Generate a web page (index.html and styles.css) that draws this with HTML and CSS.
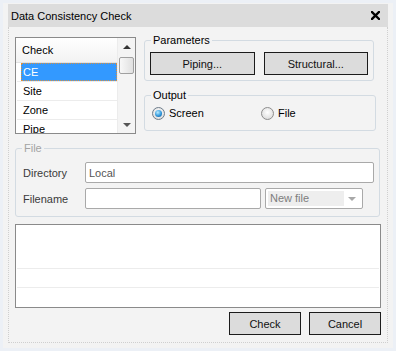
FILE: index.html
```html
<!DOCTYPE html>
<html>
<head>
<meta charset="utf-8">
<link rel="stylesheet" href="styles.css">
</head>
<body>
<div class="window">
  <div class="titlebar">
    <span class="title">Data Consistency Check</span>
    <svg class="close" width="9" height="9" viewBox="0 0 9 9"><path d="M1 1 L8 8 M8 1 L1 8" stroke="#000" stroke-width="2.4" stroke-linecap="square"/></svg>
  </div>
  <div class="panel">
    <div class="toprow">
      <div class="listbox">
        <div class="listcol">
          <div class="listhead">Check</div>
          <div class="row"><div class="cell selected">CE</div></div>
          <div class="row"><div class="cell">Site</div></div>
          <div class="row"><div class="cell">Zone</div></div>
          <div class="row"><div class="cell">Pipe</div></div>
        </div>
        <div class="scrollbar">
          <div class="sbtn"><span class="tri-up"></span></div>
          <div class="track"><div class="thumb"></div></div>
          <div class="sbtn"><span class="tri-down"></span></div>
        </div>
      </div>
      <div class="rightcol">
        <fieldset class="group params">
          <legend>Parameters</legend>
          <div class="btnrow">
            <button class="btn wide">Piping...</button>
            <button class="btn wide">Structural...</button>
          </div>
        </fieldset>
        <fieldset class="group output">
          <legend>Output</legend>
          <div class="radios">
            <div class="opt"><span class="radio checked"><span class="dot"></span></span><span>Screen</span></div>
            <div class="opt"><span class="radio"></span><span>File</span></div>
          </div>
        </fieldset>
      </div>
    </div>
    <fieldset class="group file">
      <legend>File</legend>
      <div class="frow">
        <span class="flabel">Directory</span>
        <input class="tinput dir" type="text" value="Local">
      </div>
      <div class="frow second">
        <span class="flabel">Filename</span>
        <input class="tinput fname" type="text" value="">
        <div class="combo"><span class="ctext">New file</span><span class="carrow"></span></div>
      </div>
    </fieldset>
    <div class="results">
      <div class="rarea"></div>
      <div class="rline"></div>
      <div class="rlast"></div>
    </div>
    <div class="actions">
      <button class="btn act">Check</button>
      <button class="btn act">Cancel</button>
    </div>
  </div>
</div>
</body>
</html>
```
FILE: styles.css
```css
* { box-sizing: border-box; }
html, body { margin: 0; padding: 0; }
body {
  background: #ecf0f6;
  font-family: "Liberation Sans", Arial, sans-serif;
  font-size: 11px;
  color: #000;
  width: 396px;
  height: 351px;
  overflow: hidden;
}
.window {
  margin: 3px 0 0 3px;
  width: 390px;
  height: 345px;
  background: #f3f3f3;
  padding: 1px 5px 0 5px;
}
.titlebar {
  height: 23px;
  background: #dcdcdc;
  display: flex;
  align-items: center;
  justify-content: space-between;
  padding: 0 8px 0 3px;
}
.title { font-size: 11px; line-height: 14px; color: #000; }
.close { display: block; }
.panel {
  border: 1px dotted #cfcfcf;
  border-top: none;
  padding: 0 6px 7px 6px;
}
.toprow { display: flex; align-items: flex-start; }
.listbox {
  margin-top: 10px;
  width: 121px;
  height: 97px;
  border: 1px solid #8a8a8a;
  background: #fff;
  display: flex;
  overflow: hidden;
}
.listcol { width: 101px; overflow: hidden; }
.listhead {
  height: 25px;
  line-height: 24px;
  padding-left: 6px;
  background: linear-gradient(#ffffff, #f3f3f3);
  border-bottom: 1px solid #e2e2e2;
}
.row {
  padding-left: 4px;
  border-bottom: 1px solid #ececec;
  margin-left: 1px;
}
.cell {
  height: 18px;
  line-height: 18px;
  padding-left: 2px;
}
.cell.selected {
  background: #3399ff;
  color: #fff;
  outline: 1px dotted #d9903f;
  outline-offset: -1px;
}
.scrollbar {
  width: 18px;
  display: flex;
  flex-direction: column;
  background: #f4f4f4;
  border-left: 1px solid #ececec;
}
.sbtn {
  height: 17px;
  display: flex;
  align-items: center;
  justify-content: center;
}
.tri-up {
  width: 0; height: 0;
  border-left: 4px solid transparent;
  border-right: 4px solid transparent;
  border-bottom: 4px solid #333;
}
.tri-down {
  width: 0; height: 0;
  border-left: 4px solid transparent;
  border-right: 4px solid transparent;
  border-top: 4px solid #555;
}
.track { flex: 1; padding: 2px 0 0 1px; }
.thumb {
  width: 15px;
  height: 17px;
  border: 1px solid #a0a0a0;
  border-radius: 2px;
  background: linear-gradient(90deg, #f8f8f8, #e0e0e0);
}
.rightcol { margin-left: 8px; margin-top: 6px; width: 232px; }
.group {
  margin: 0;
  border: 1px solid #d3dbe2;
  border-radius: 3px;
  min-width: 0;
}
.group legend {
  line-height: 14px;
  padding: 0 2px;
  font-size: 11px;
}
.params { width: 230px; padding: 5px 5px 5px 5px; }
.params legend { margin-left: 1px; }
.btnrow { display: flex; gap: 9px; }
.btn {
  font-family: "Liberation Sans", Arial, sans-serif;
  font-size: 11px;
  color: #111;
  background: #dcdcdc;
  border: 1px solid #1c1c1c;
  border-radius: 0;
  height: 23px;
  padding: 0;
}
.btn.wide { width: 105px; }
.output { width: 232px; margin-top: 7px; padding: 1px 5px 7px 7px; }
.output legend { margin-left: -1px; }
.radios { display: flex; height: 20px; align-items: center; }
.opt { display: flex; align-items: center; gap: 4px; width: 116px; }
.radio {
  width: 13px; height: 13px;
  border-radius: 50%;
  border: 1px solid #8d8d8d;
  background: radial-gradient(circle at 50% 40%, #ffffff, #d4d4d4);
  display: flex;
  align-items: center;
  justify-content: center;
}
.radio.checked { border-color: #6d7c8a; }
.dot {
  width: 7px; height: 7px;
  border-radius: 50%;
  background: radial-gradient(circle at 40% 35%, #b9ecff, #2f97dc 55%, #0b4d8a);
}
.file {
  margin-top: 7px;
  width: 365px;
  padding: 7px 5px 7px 7px;
}
.file legend { margin-left: -1px; color: #a3a3a3; }
.frow { display: flex; align-items: center; height: 21px; }
.frow.second { margin-top: 5px; }
.flabel { width: 62px; color: #3a3a3a; }
.tinput {
  height: 21px;
  border: 1px solid #a9a9a9;
  border-radius: 2px;
  background: #fff;
  padding: 0 3px;
  font-family: "Liberation Sans", Arial, sans-serif;
  font-size: 11px;
  color: #555;
  outline: none;
  margin: 0;
}
.tinput.dir { width: 289px; }
.tinput.fname { width: 176px; }
.combo {
  margin-left: 4px;
  width: 98px;
  height: 21px;
  border: 1px solid #a9a9a9;
  border-radius: 2px;
  background: #fff;
  padding: 2px;
  display: flex;
  align-items: stretch;
}
.ctext {
  width: 76px;
  background: #eeeeee;
  color: #7d7d7d;
  padding-left: 2px;
  line-height: 15px;
}
.carrow {
  flex: 1;
  display: flex;
  align-items: center;
  justify-content: center;
}
.carrow::before {
  content: "";
  width: 0; height: 0;
  border-left: 4px solid transparent;
  border-right: 4px solid transparent;
  border-top: 4px solid #a8a8a8;
}
.results {
  margin-top: 7px;
  height: 84px;
  border: 1px solid #8a8a8a;
  background: #fff;
  padding: 0 1px;
  display: flex;
  flex-direction: column;
}
.rarea { height: 44px; border-bottom: 1px solid #ececec; }
.rline { height: 19px; border-bottom: 1px solid #ececec; }
.rlast { flex: 1; }
.actions {
  margin-top: 4px;
  display: flex;
  justify-content: flex-end;
  gap: 8px;
}
.btn.act { width: 72px; }
```
